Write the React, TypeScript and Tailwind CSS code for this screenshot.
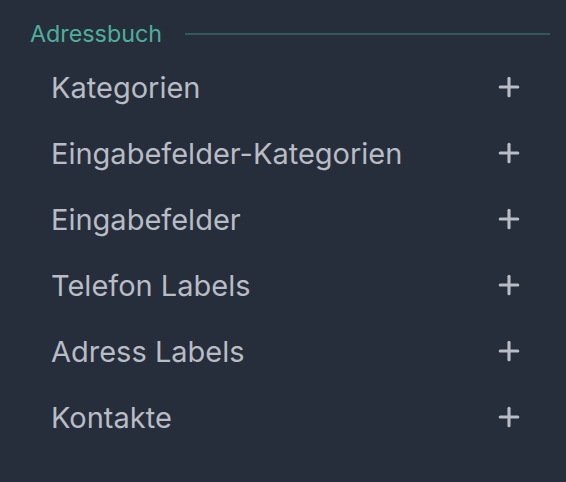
import { Plus } from "lucide-react";

const items = [
  "Kategorien",
  "Eingabefelder-Kategorien",
  "Eingabefelder",
  "Telefon Labels",
  "Adress Labels",
  "Kontakte",
];

export default function App() {
  return (
    <div
      className="w-[566px] h-[482px] bg-[#262d3b] pt-[20px] pl-[30px] pr-[16px]"
      style={{ fontFamily: "Inter, 'Noto Sans', sans-serif" }}
    >
      <div className="flex items-center gap-[23px] h-[28px]">
        <span className="text-[23.3px] text-[#4fae9b] leading-none">Adressbuch</span>
        <div className="flex-1 h-[2px] bg-[#2f5b5c]" />
      </div>
      <ul className="mt-[6px]">
        {items.map((name) => (
          <li key={name} className="flex items-center justify-between h-[66px] pl-[21px] pr-[26px]">
            <span className="text-[29px] text-[#b8bcc4] leading-none">{name}</span>
            <Plus size={30} strokeWidth={2.5} className="text-[#b8bcc4]" />
          </li>
        ))}
      </ul>
    </div>
  );
}
